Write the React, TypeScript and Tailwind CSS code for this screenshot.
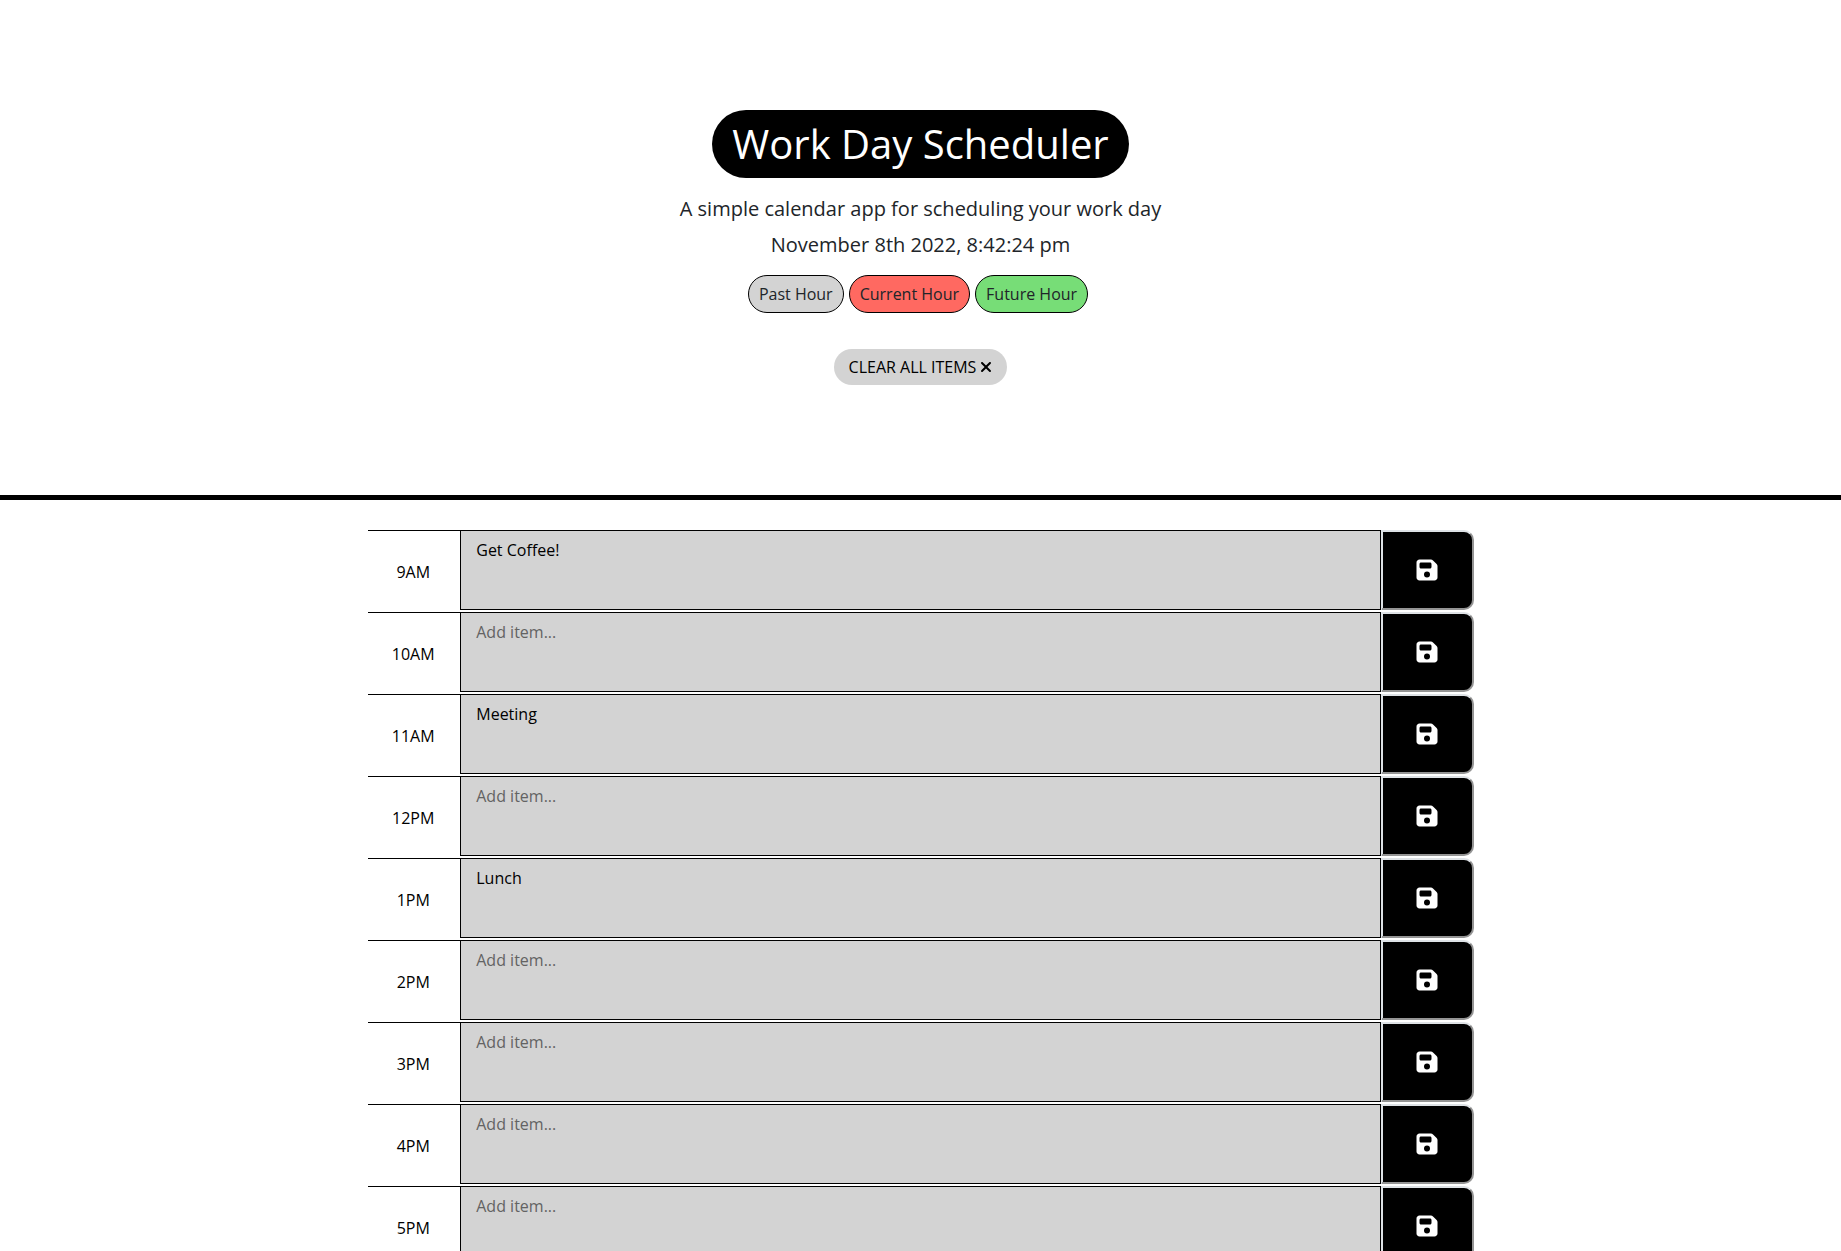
import { useState } from "react";
import { FaFloppyDisk, FaXmark } from "react-icons/fa6";

const HOURS = ["9AM", "10AM", "11AM", "12PM", "1PM", "2PM", "3PM", "4PM", "5PM"];

const INITIAL_ITEMS: Record<string, string> = {
  "9AM": "Get Coffee!",
  "11AM": "Meeting",
  "1PM": "Lunch",
};

type HourRowProps = {
  hour: string;
  value: string;
  onChange: (value: string) => void;
};

function HourRow({ hour, value, onChange }: HourRowProps) {
  const id = `item-${hour}`;
  return (
    <div className="grid h-[82px] grid-cols-12">
      <label htmlFor={id} className="flex items-center justify-center border-t border-black pr-0.5">
        {hour}
      </label>
      <textarea
        id={id}
        value={value}
        onChange={(event) => onChange(event.target.value)}
        placeholder="Add item..."
        className="col-span-10 block h-20 resize-none border border-black bg-[#d3d3d3] px-[15px] py-[7px] text-black placeholder:text-[#636363] placeholder:opacity-100"
      />
      <button
        type="button"
        aria-label={`Save ${hour}`}
        className="-mr-px flex h-20 items-center justify-center rounded-r-[10px] border-2 border-t-[#dee2e6] border-r-[#949494] border-b-[#949494] border-l-[#dee2e6] bg-black text-white"
      >
        <FaFloppyDisk className="size-6" />
      </button>
    </div>
  );
}

export default function App() {
  const [items, setItems] = useState(INITIAL_ITEMS);

  return (
    <div className="h-screen overflow-hidden bg-white font-['Open_Sans',sans-serif] text-base text-black">
      <header className="flex flex-col items-center border-b-[5px] border-black pt-[110px] pb-[110px] text-[#212529]">
        <h1 className="rounded-full bg-black px-5 py-2.5 text-[40px] leading-[48px] text-white">
          Work Day Scheduler
        </h1>
        <p className="mt-4 text-xl leading-[30px]">A simple calendar app for scheduling your work day</p>
        <p className="mt-1.5 text-xl leading-[30px]">November 8th 2022, 8:42:24 pm</p>
        <div className="mt-[15px] mr-[5px] flex gap-[5px]">
          <span className="rounded-[20px] border border-black bg-[#d3d3d3] px-2.5 py-1.5">Past Hour</span>
          <span className="rounded-[20px] border border-black bg-[#ff6961] px-2.5 py-1.5">Current Hour</span>
          <span className="rounded-[20px] border border-black bg-[#77dd77] px-2.5 py-1.5">Future Hour</span>
        </div>
        <button
          type="button"
          onClick={() => setItems({})}
          className="mt-9 flex items-center gap-1 rounded-[20px] bg-[#d3d3d3] px-[15px] py-1.5 text-black"
        >
          CLEAR ALL ITEMS
          <FaXmark className="h-4 w-3" />
        </button>
      </header>
      <main className="mx-auto mt-[30px] w-3/5">
        {HOURS.map((hour) => (
          <HourRow
            key={hour}
            hour={hour}
            value={items[hour] ?? ""}
            onChange={(value) => setItems({ ...items, [hour]: value })}
          />
        ))}
      </main>
    </div>
  );
}
